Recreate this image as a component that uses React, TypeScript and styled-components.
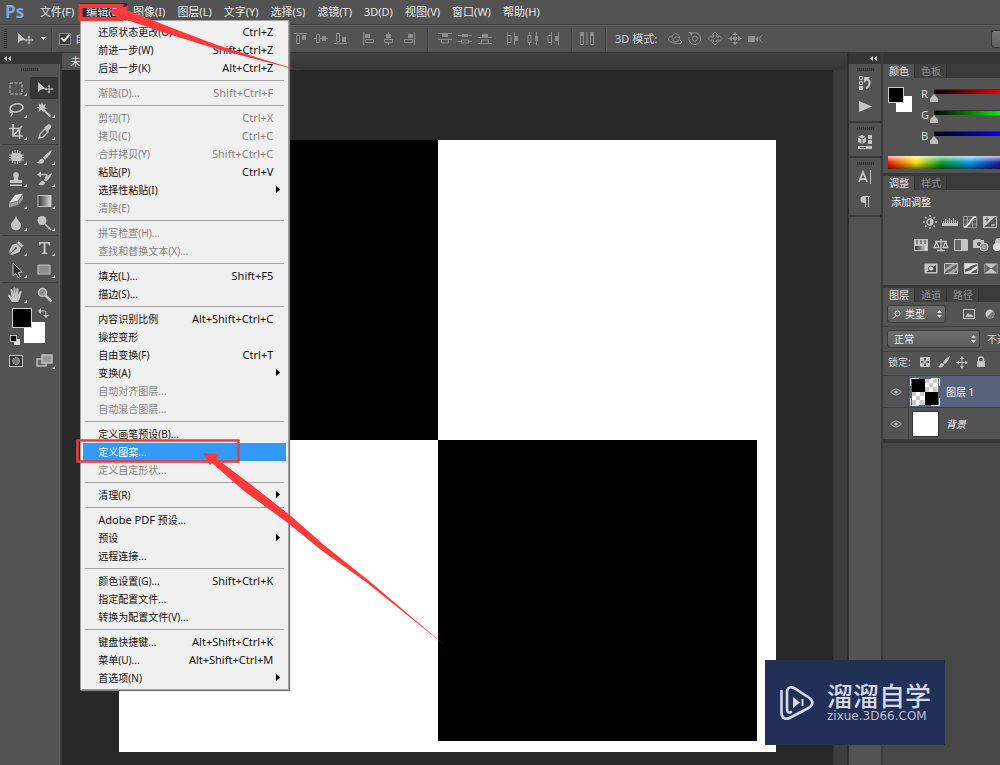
import React from 'react';
import styled, { createGlobalStyle, css } from 'styled-components';

const GlobalStyle = createGlobalStyle`
  *, *::before, *::after { box-sizing: border-box; }
  html, body { margin: 0; height: 100%; overflow: hidden; }
  body {
    background: #535353;
    color: #dcdcdc;
    font-family: 'Noto Sans', 'Noto Sans CJK SC', sans-serif;
    font-size: 11px;
    line-height: 16px;
  }
  button, input, select { font: inherit; color: inherit; margin: 0; }
  button { border: 0; padding: 0; background: none; }
  ul { list-style: none; margin: 0; padding: 0; }
  svg { display: block; flex: none; }
`;

const App_ = styled.div`
  position: relative;
  display: flex;
  flex-direction: column;
  height: 100vh;
  overflow: hidden;
`;

/* ---------- menu bar ---------- */

const MenuBar = styled.nav`
  display: flex;
  align-items: center;
  height: 24px;
  flex: none;
  padding-left: 5px;
  background: #535353;
`;
const Logo = styled.div`
  width: 29px;
  color: #7ba9d6;
  font: bold 17px/24px 'Open Sans', 'Noto Sans', sans-serif;
`;
const MenuEntry = styled.div`
  position: relative;
`;
const MenuTitle = styled.button<{ $open?: boolean }>`
  display: block;
  height: 18px;
  padding: 0 6px;
  white-space: nowrap;
  color: #e6e6e6;
  background: ${(p) => (p.$open ? '#2f2f2f' : 'transparent')};
`;
const Dropdown = styled.ul`
  position: absolute;
  z-index: 5;
  top: 17px;
  left: 0;
  width: 209px;
  padding: 2px 2px 2px;
  background: #f0f0f0;
  border: 1px solid #a0a0a0;
  box-shadow: 1px 1px 1px #777;
`;
const Command = styled.button<{ $off?: boolean; $hot?: boolean }>`
  display: flex;
  align-items: center;
  width: 100%;
  height: 18px;
  padding: 0 6px 0 15px;
  font-size: 10px;
  white-space: nowrap;
  text-align: left;
  color: ${(p) => (p.$hot ? '#fff' : p.$off ? '#838383' : '#111')};
  background: ${(p) => (p.$hot ? '#3399ff' : 'transparent')};
`;
const CommandName = styled.span`
  flex: 1;
`;
const Latin = styled.span`
  font-size: 11px;
`;
const Shortcut = styled.kbd`
  padding-right: 7px;
  font-family: inherit;
  font-size: 11px;
`;
const MenuRule = styled.li`
  height: 7px;
  margin: 0 2px;
  border-bottom: 3px solid transparent;
  padding-top: 3px;
  background: linear-gradient(#a4a4a4, #a4a4a4) content-box;
`;

/* ---------- options bar ---------- */

const OptionsBar = styled.div`
  display: flex;
  align-items: center;
  flex: none;
  height: 29px;
  padding-left: 4px;
  overflow: hidden;
  background: #535353;
  border-top: 1px solid #3f3f3f;
  border-bottom: 1px solid #383838;
  box-shadow: inset 0 1px #626262;
  color: #cfcfcf;
`;
const Divider = styled.i`
  width: 2px;
  height: 24px;
  flex: none;
  background: #414141;
  border-right: 1px solid #5f5f5f;
`;
const OptionGroup = styled.div<{ $gap?: number; $left?: number; $right?: number }>`
  display: flex;
  align-items: center;
  flex: none;
  gap: ${(p) => p.$gap ?? 4}px;
  padding: 0 ${(p) => p.$right ?? 0}px 0 ${(p) => p.$left ?? 0}px;
`;
const AutoSelect = styled.label`
  display: flex;
  align-items: center;
  gap: 4px;
  width: 234px;
  flex: none;
  padding-left: 6px;
  white-space: nowrap;
`;
const Check = styled.input`
  appearance: none;
  width: 12px;
  height: 12px;
  border: 1px solid #8a8a8a;
  background: #3c3c3c;
  display: grid;
  place-items: center;
  &::after {
    content: '';
    width: 9px;
    height: 5px;
    border: solid #e8e8e8;
    border-width: 0 0 2px 2px;
    transform: rotate(-48deg) translate(1px, -1px);
  }
`;
const EdgeButton = styled.button`
  width: 9px;
  height: 18px;
  margin-left: auto;
  border: 1px solid #383838;
  border-right: 0;
  border-radius: 3px 0 0 3px;
  background: linear-gradient(#777, #5e5e5e);
`;

/* ---------- workspace ---------- */

const Workspace = styled.div`
  display: flex;
  flex: 1;
  min-height: 0;
  background: #3a3a3a;
`;
const Column = styled.aside<{ $w: number }>`
  display: flex;
  flex-direction: column;
  flex: none;
  width: ${(p) => p.$w}px;
  margin-right: 2px;
  overflow: hidden;
`;
const CollapseBar = styled.div<{ $end?: boolean }>`
  display: flex;
  align-items: center;
  justify-content: ${(p) => (p.$end ? 'flex-end' : 'flex-start')};
  flex: none;
  height: 11px;
  padding: 0 3px;
  background: #363636;
`;
const ToolBody = styled.div`
  flex: 1;
  padding: 4px 1px 4px 2px;
  background: #535353;
  border-right: 1px solid #606060;
`;
const Grip = styled.i<{ $w: number }>`
  display: block;
  width: ${(p) => p.$w}px;
  height: 3px;
  margin: 0 auto;
  background: repeating-linear-gradient(90deg, #333 0 1px, #4c4c4c 1px 2px);
`;
const ToolGroup = styled.div<{ $rule?: boolean; $top?: number }>`
  display: grid;
  grid-template-columns: 28px 28px;
  padding: ${(p) => p.$top ?? 1}px 0 1px;
  ${(p) => p.$rule && css`border-top: 1px solid #3e3e3e;`}
`;
const Tool = styled.button<{ $on?: boolean }>`
  width: 28px;
  height: 22px;
  border-radius: 3px;
  ${(p) => p.$on && css`background: #373737; box-shadow: inset 0 0 0 1px #2d2d2d;`}
`;

const DocArea = styled.main`
  display: flex;
  flex-direction: column;
  flex: 1;
  min-width: 0;
  border-right: 2px solid #303030;
  background: #282828;
`;
const DocTabs = styled.div`
  display: flex;
  height: 17px;
  flex: none;
  background: linear-gradient(#404040, #373737);
`;
const DocTab = styled.button`
  padding: 0 8px;
  background: #535353;
`;
const DocBody = styled.div`
  display: flex;
  flex: 1;
  min-height: 0;
`;
const Pasteboard = styled.div`
  display: flex;
  flex: 1;
  padding: 70px 57px 13px;
`;
const Artboard = styled.div`
  flex: 1;
  display: grid;
  grid-template-columns: 319fr 319fr 19fr;
  grid-template-rows: 300fr 300fr 11fr;
  background: #fff;
`;
const Block = styled.div<{ $cell: number }>`
  grid-area: ${(p) => `${p.$cell} / ${p.$cell}`};
  background: #000;
`;
const Scroll = styled.div`
  width: 14px;
  background: #3d3d3d;
  border-left: 1px solid #333;
`;

/* ---------- docked icon strip ---------- */

const DockBody = styled.div`
  flex: 1;
  background: #535353;
`;
const DockGroup = styled.div`
  display: flex;
  flex-direction: column;
  align-items: center;
  padding: 4px 0 2px;
  border-bottom: 2px solid #3a3a3a;
`;
const DockButton = styled.button`
  width: 24px;
  height: 24px;
  display: grid;
  place-items: center;
`;

/* ---------- panels ---------- */

const Panels = styled.aside`
  display: flex;
  flex-direction: column;
  flex: none;
  width: 117px;
  overflow: hidden;
  background: #474747;
  font-size: 10px;
`;
const PanelTabs = styled.div`
  display: flex;
  flex: none;
  height: 14px;
  background: #3b3b3b;
`;
const PanelTab = styled.button<{ $on?: boolean }>`
  flex: none;
  padding: 0 5px 0 6px;
  line-height: 14px;
  border-right: 1px solid #303030;
  background: ${(p) => (p.$on ? '#535353' : '#414141')};
  color: ${(p) => (p.$on ? '#e4e4e4' : '#8f8f8f')};
`;
const PanelBody = styled.div<{ $h?: number }>`
  ${(p) => p.$h && css`height: ${p.$h}px;`}
  flex: none;
  background: #535353;
  border-bottom: 3px solid #383838;
  overflow: hidden;
`;
const ColorTop = styled.div`
  display: flex;
  gap: 9px;
  padding: 5px 0 0 5px;
`;
const Sliders = styled.div`
  flex: none;
`;
const Channel = styled.label`
  display: flex;
  align-items: center;
  height: 21px;
  width: 160px;
  font-size: 11px;
`;
const ChannelName = styled.span`
  width: 13px;
`;
const Range = styled.input<{ $to: string }>`
  appearance: none;
  width: 140px;
  height: 14px;
  padding-bottom: 4px;
  background: none;
  &::-webkit-slider-runnable-track {
    height: 5px;
    background: linear-gradient(90deg, #000, ${(p) => p.$to} 70px);
    border-top: 1px solid #333;
  }
  &::-webkit-slider-thumb {
    appearance: none;
    width: 8px;
    height: 8px;
    margin: 4px 0 0 -4px;
    background: #bdbdbd;
    clip-path: polygon(50% 0, 100% 55%, 100% 100%, 0 100%, 0 55%);
  }
`;
const Spectrum = styled.div`
  height: 13px;
  margin: 10px 0 0 5px;
  background:
    linear-gradient(rgba(255,255,255,.75), rgba(255,255,255,0) 50%, rgba(0,0,0,.55)),
    linear-gradient(90deg, #f01800, #ffe800 28px, #00a030 54px, #00a0f0 82px, #2818a0 112px);
`;
const AdjustTitle = styled.h2`
  margin: 0;
  padding: 4px 8px 4px;
  font-size: 10px;
  font-weight: 400;
  line-height: 17px;
  color: #eee;
`;
const AdjustRow = styled.div<{ $left: number }>`
  display: flex;
  align-items: flex-start;
  gap: 4px;
  height: 23px;
  padding-left: ${(p) => p.$left}px;
`;
const Field = styled.div`
  display: flex;
  align-items: center;
  height: 25px;
  padding-left: 4px;
  gap: 7px;
  white-space: nowrap;
  border-bottom: 1px solid #444;
`;
const SelectBox = styled.span<{ $w: number }>`
  position: relative;
  display: flex;
  align-items: center;
  flex: none;
  width: ${(p) => p.$w}px;
  height: 18px;
  border: 1px solid #3a3a3a;
  border-radius: 3px;
  background: linear-gradient(#6e6e6e, #5c5c5c);
  & > svg { position: absolute; pointer-events: none; }
  & > svg:last-child { right: 2px; }
  & > svg:first-child:not(:last-child) { left: 4px; }
`;
const Select = styled.select<{ $pad: number }>`
  appearance: none;
  width: 100%;
  height: 16px;
  padding: 0 0 0 ${(p) => p.$pad}px;
  border: 0;
  background: none;
  color: #eee;
`;
const LockRow = styled.div`
  display: flex;
  align-items: center;
  gap: 4px;
  height: 23px;
  padding: 0 0 4px 5px;
`;
const LayerItem = styled.li`
  display: flex;
  height: 32px;
  border-top: 1px solid #3d3d3d;
  background: #535353;
`;
const Eye = styled.button`
  width: 26px;
  display: grid;
  place-items: center;
  border-right: 1px solid #424242;
`;
const LayerMain = styled.button<{ $on?: boolean; $bg?: boolean }>`
  display: flex;
  align-items: center;
  gap: 6px;
  flex: 1;
  padding-left: 1px;
  text-align: left;
  white-space: nowrap;
  color: #f0f0f0;
  font-style: ${(p) => (p.$bg ? 'italic' : 'normal')};
  background: ${(p) => (p.$on ? '#576378' : 'transparent')};
`;
const LayerList = styled.ul`
  border-bottom: 1px solid #383838;
`;

/* ---------- overlays ---------- */

const Marks = styled.svg`
  position: absolute;
  z-index: 8;
  top: 0;
  left: 0;
  pointer-events: none;
`;
const Badge = styled.div`
  position: absolute;
  z-index: 9;
  right: 55px;
  bottom: 20px;
  display: flex;
  align-items: center;
  gap: 12px;
  width: 180px;
  height: 85px;
  padding-left: 14px;
  background: #223058;
  color: #d4d8e2;
`;
const BadgeText = styled.div`
  padding-bottom: 4px;
`;
const BadgeName = styled.div`
  font: 500 26px/30px 'Noto Sans CJK SC', sans-serif;
  white-space: nowrap;
`;
const BadgeUrl = styled.div`
  font: 12px/12px 'DejaVu Sans', sans-serif;
  color: #b9bfce;
`;

/* ---------- drawings ---------- */

const Chevrons = () => (
  <svg width="9" height="7" viewBox="0 0 9 7" fill="#ccc"><path d="M4 1v5L1 3.500zM8 1v5L5 3.500z" /></svg>
);
const UpDown = () => (
  <svg width="7" height="10" viewBox="0 0 7 10" fill="#ddd"><path d="M3.500 1 6 4H1zM3.500 9 1 6h5z" /></svg>
);

const G = '#c4c4c4';
const toolArt: Record<string, React.ReactNode> = {
  marquee: <rect x="8" y="6" width="12" height="11" fill="none" stroke={G} strokeDasharray="3 1.500" />,
  move: <><path d="M8 5v10l3-2.500 5-.5z" fill={G} /><path d="M19 9v6M16 12h6" stroke={G} /><path d="m19 7.500 1.500 2h-3zm0 9-1.500-2h3zm-4.500-4.500 2-1.500v3zm9 0-2-1.500v3z" fill={G} /></>,
  lasso: <><ellipse cx="14.500" cy="9" rx="6.500" ry="4" fill="none" stroke={G} strokeWidth="1.600" transform="rotate(-12 14 9)" /><path d="M9 11c-2 1-1 3 .5 2.500S10 17 8.500 17" fill="none" stroke={G} strokeWidth="1.300" /></>,
  wand: <><path d="m12 3 1 3 3-1-1.500 2.800L17 9.500l-3 .5-.5 3.500-2-2.800L8.500 13l.8-3.200-3-1.200 3-1L8.500 4.500l2.700 1.300z" fill={G} /><path d="m13.500 10.500 7 7" stroke={G} strokeWidth="2" /></>,
  crop: <path d="M11 3v12h10M7 7.500h10.500V18M11 15l9-10" fill="none" stroke={G} strokeWidth="1.700" />,
  dropper: <><path d="m9 17 1-4 5-5 3 3-5 5z" fill="none" stroke={G} strokeWidth="1.400" /><path d="m14 6.500 1.500-1L18 3.500c2-1 4 1 3 3l-2.500 3-.500 1z" fill={G} /></>,
  patch: <><rect x="9" y="7" width="11" height="8" rx="3" fill={G} /><path d="M10.500 5v12M13 4v14M15.500 4v14M18 5v12M7 9h15M7 11.500h15M7 14h15" stroke={G} strokeWidth=".9" /></>,
  brush: <><path d="M22 4c-4 2-7 5-9 8l2 1.800C18 11 21 8 22 4z" fill={G} /><path d="M12.300 12.500c-3 0-2 3-6 4 3 2 8 1.500 8-2z" fill={G} /></>,
  stamp: <path d="M14 4a3 3 0 0 1 2.500 4.500c-.8 1.500-.5 2.500 0 3.500H20v3H8v-3h3.500c.5-1 .8-2 0-3.500A3 3 0 0 1 14 4zM8 16.500h12V18H8z" fill={G} />,
  history: <><path d="M22 5c-4 2-6 4-8 7l2 1.500c3-2 5-5 6-8.500zM13 12.500c-3 0-2 3-5 4 3 1.500 7 1 7-2z" fill={G} /><path d="M10 6.500h6c2 0 1 2-1 3" fill="none" stroke={G} strokeWidth="1.300" /><path d="m7 6.500 4-3v6z" fill={G} /></>,
  eraser: <><path d="m13 5 8-1.500-5 7-9 2.500z" fill="#dedede" /><path d="m7 13.500 9-2.500v4l-9 2.500zM16.500 11l4.500-6v4l-4.500 6z" fill="#9c9c9c" /></>,
  gradient: <rect x="8" y="5.500" width="13" height="11" fill="url(#tone)" stroke={G} />,
  blur: <path d="M14 4c1 4 5 6 5 9.500a5 5 0 0 1-10 0C9 10 13 8 14 4z" fill={G} />,
  dodge: <><circle cx="12" cy="8.500" r="4.500" fill={G} /><path d="m15 12 6 6" stroke={G} strokeWidth="1.600" /></>,
  pen: <><path d="m16.500 4 5 4.500-2 2L15 6z" fill={G} /><path d="m14.500 6.500 4.500 4.500-1.500 4-7.500 3-1.500-1 5-4.500a1.200 1.200 0 1 0-1-1L8 16l-1-1 3-7z" fill={G} /></>,
  type: <path d="M9 5h11v3.500h-1L18 6.500h-2.500v9l2 .5v1h-6v-1l2-.5v-9H11l-1 2H9z" fill={G} />,
  path: <path d="M11 4v13l3-2.500 2 4 2.200-1-2-4 4-.5z" fill="#2f2f2f" stroke={G} />,
  shape: <rect x="8" y="6" width="12" height="9" fill="#8d8d8d" stroke={G} />,
  hand: <path d="m10 18-4-6c-.5-1.500 1-2 2-.5l1.500 1.500L8.500 6c0-1.500 1.500-1.500 2 0l1 4V4.500c0-1.500 2-1.500 2 0V10l1-5c.5-1.500 2-1 2 0l-.5 6 1.800-3.500c1-1 2-.5 1.700.5L18 14l-2 4z" fill={G} />,
  zoom: <><circle cx="12.500" cy="8.500" r="4" fill="#919191" stroke={G} strokeWidth="1.500" /><path d="m15.500 11.500 6 6" stroke={G} strokeWidth="2.500" /></>,
  mask: <><rect x="7.500" y="5.500" width="13" height="11" fill="#333" stroke={G} /><circle cx="14" cy="11" r="3.500" fill="#777" stroke="#ccc" strokeDasharray="1.500 1" /></>,
  screen: <><rect x="7" y="9" width="9" height="7" fill="#666" stroke={G} strokeWidth="1.400" /><rect x="12" y="5" width="10" height="8" fill="#999" stroke={G} strokeWidth="1.400" /></>,
};

const toolGroups: [string, string][][] = [
  [['marquee', '矩形选框'], ['move', '移动'], ['lasso', '套索'], ['wand', '魔棒'], ['crop', '裁剪'], ['dropper', '吸管']],
  [['patch', '修补'], ['brush', '画笔'], ['stamp', '图章'], ['history', '历史画笔'], ['eraser', '橡皮擦'], ['gradient', '渐变'], ['blur', '模糊'], ['dodge', '减淡']],
  [['pen', '钢笔'], ['type', '文字'], ['path', '路径选择'], ['shape', '矩形']],
  [['hand', '抓手'], ['zoom', '缩放']],
];

const ToolIcon = ({ name }: { name: string }) => (
  <svg width="28" height="22" viewBox="0 0 28 22">
    <defs><linearGradient id="tone"><stop stopColor="#333" /><stop offset="1" stopColor="#ddd" /></linearGradient></defs>
    {toolArt[name]}
    {!['move', 'zoom', 'mask'].includes(name) && <path d="M25 16v3h-3z" fill="#ddd" />}
  </svg>
);

const alignArt: Record<string, React.ReactNode> = {
  top: <><path d="M1 2.500h13" /><path d="M3.500 4.500h3v8h-3z" /><path className="f" d="M9 4h4v5H9z" /></>,
  middle: <><path d="M1 7.500h2M7 7.500h8" /><path d="M3.500 3.500h3v8h-3z" /><path className="f" d="M9 5h4v5H9z" /></>,
  bottom: <><path d="M1 12.500h13" /><path d="M3.500 2.500h3v8h-3z" /><path className="f" d="M9 6h4v5H9z" /></>,
  left: <><path d="M2.500 1v13" /><path d="M4.500 8.500h8v3h-8z" /><path className="f" d="M4 3h5v4H4z" /></>,
  center: <><path d="M7.500 1v7M7.500 12v2" /><path d="M3.500 8.500h8v3h-8z" /><path className="f" d="M5 3h5v4H5z" /></>,
  right: <><path d="M13.500 1v13" /><path d="M3.500 8.500h8v3h-8z" /><path className="f" d="M7 3h5v4H7z" /></>,
  dtop: <><path d="M1 2.500h14M1 8.500h14M4.500 9v3h7V9" /><path className="f" d="M5 3h6v3H5z" /></>,
  dmid: <><path d="M1 4.500h14M1 10.500h3M12 10.500h3M4.500 9v3h7V9z" /><path className="f" d="M5 3h6v3H5z" /></>,
  dbot: <><path d="M1 6.500h14M1 12.500h14M4.500 12V9h7v3" /><path className="f" d="M5 3h6v3H5z" /></>,
  dleft: <><path d="M2.500 1v13M9.500 1v13M3 4.500h3v7H3" /><path className="f" d="M10 5h3v5h-3z" /></>,
  dcen: <><path d="M4.500 1v3M4.500 12v2M11.500 1v13M3 4.500h3v7H3z" /><path className="f" d="M10 5h3v5h-3z" /></>,
  dright: <><path d="M6.500 1v13M13.500 1v13M6 4.500H3v7h3" /><path className="f" d="M10 5h3v5h-3z" /></>,
  auto: <><path d="M1.500 1.500h3v12h-3zM11.500 1.500h3v12h-3zM8 1v13" /><path className="f" d="M1 1h4v4H1zM11 1h4v4h-4z" /></>,
  orbit: <><path d="M5 8C5 4 7 2 10 3s3 5 1 7-5 1-5-1 4-4 7-2M5 5C1 6 0 9 4 11s9 2 11 0M13 9l2 2-2 2" /></>,
  roll: <><circle cx="8" cy="7.500" r="2.500" /><path d="M5 2.300a6 6 0 1 1-3 3.700" /><path className="f" d="M1 1h4v4z" /></>,
  pan: <><path d="M6.500 6V4H5l3-3 3 3H9.500v2H12V4.500l3 3-3 3V9H9.500v2H11l-3 3-3-3h1.500V9H4v1.500l-3-3 3-3V6z" /></>,
  slide: <><path d="M3 7.500h10M8 4v8" /><path className="f" d="M8 1l3 3H5zM8 14l3-3H5zM1 7.500 5 5v5zM15 7.500 11 5v5zM6 6h4v3H6z" /></>,
  camera: <><path className="f" d="M1 5h7v6H1zM8 8l3-3v6z" /><path d="m15 4-3 3.500 3 4" /></>,
};
const Glyph = styled.svg`
  fill: none;
  stroke: #8d8d8d;
  .f { fill: #8d8d8d; stroke: none; }
`;
const Align = ({ n }: { n: string }) => (
  <button aria-label={n}><Glyph width="16" height="15" viewBox="0 0 16 15">{alignArt[n]}</Glyph></button>
);

const adjustArt: Record<string, React.ReactNode> = {
  sun: <><circle cx="8" cy="7" r="3" fill="none" stroke={G} strokeWidth="1.300" /><path d="M8 4a3 3 0 0 1 0 6z" fill={G} /><path d="M8 0v2M8 12v2M1 7h2M13 7h2M3 2l1.500 1.500M11.500 10.500 13 12M13 2l-1.500 1.500M4.500 10.500 3 12" stroke={G} strokeWidth="1.300" /></>,
  levels: <path d="M0 11V8h1V6h1v2h1V4h1v4h1V5h1v3h1V3h1v5h1V5h1v3h1V3h1v5h1V5h1v3h1V6h1v5z" fill={G} />,
  curves: <><path d="M1.500 1.500h13v11h-13zM1 5h14M1 9h14M5.500 1v12M10.500 1v12" stroke="#999" fill="none" /><path d="M2 12c6 0 6-10 12-10" stroke="#eee" fill="none" strokeWidth="1.500" /></>,
  exposure: <><path d="M1 1h14v12H1z" fill={G} /><path d="M14 1 2 12h12z" fill="#555" /><path d="M3 4.500h4M5 2.500v4" stroke="#444" /><path d="M9 10h4" stroke="#eee" /><path d="M1.500 1.500h13v11h-13z" fill="none" stroke={G} /></>,
  hue: <><path d="M1 1h14v12H1z" fill={G} /><path d="M4 2v4M8 2v4M12 2v4" stroke="#666" strokeWidth="1.500" /><path d="M2 8h12v4H2z" fill="url(#tone)" /></>,
  balance: <path d="M8 1v11M4 12.500h8M2 3.500h12M3.500 4 1 9.500h5zM12.500 4 10 9.500h5z" fill="none" stroke={G} strokeWidth="1.300" />,
  bw: <><path d="M1.500 1.500h13v11h-13z" fill="#666" stroke={G} /><path d="M8 2h6v10H8z" fill={G} /></>,
  photo: <><path d="M0 2h2l1-1h4l1 1h3v8H0z" fill={G} /><circle cx="6" cy="6" r="2" fill="#555" /><circle cx="11" cy="9" r="4" fill="#999" stroke={G} /></>,
  mixer: <><circle cx="6" cy="4" r="4" fill={G} /><circle cx="4" cy="9" r="4" fill="#ddd" /></>,
  invert: <><path d="M1.500 2.500h13v10h-13z" fill={G} /><path d="M3 11 13 4v7z" fill="#444" /><circle cx="8" cy="7.500" r="2.500" fill="#ddd" stroke="#555" /></>,
  poster: <><path d="M1.500 2.500h13v10h-13z" fill="#666" stroke={G} /><path d="M2 8 9 3h5L2 11zM5 12l9-6v3l-4 3z" fill="#a8a8a8" /></>,
  thresh: <><path d="M1.500 2.500h13v10h-13z" fill="#ddd" stroke={G} /><path d="m2 8 4-1 2-2 6-2v2l-4 2-2 2-6 2zM8 12l2-2 4-2v4z" fill="#555" /></>,
  gmap: <><path d="M1.500 2.500h13v10h-13z" fill={G} /><path d="m2 3 6 4.500L2 12zM14 3 8 7.500l6 4.500z" fill="#666" /></>,
};
const Adjust = ({ n }: { n: string }) => (
  <button aria-label={n}><svg width="16" height="14" viewBox="0 0 16 14">{adjustArt[n]}</svg></button>
);

const EyeIcon = () => (
  <svg width="12" height="8" viewBox="0 0 12 8"><path d="M1 4c3-4 7-4 10 0-3 4-7 4-10 0z" fill="none" stroke="#a8a8a8" strokeWidth="1.200" /><circle cx="6" cy="4" r="1.800" fill="#a8a8a8" /></svg>
);
const Checker = () => (
  <svg width="30" height="28" viewBox="0 0 30 28">
    <rect x="2" y="1" width="26" height="26" fill="#fff" />
    <path d="M15 1h4v4h-4zM23 1h4v4h-4zM19 5h4v4h-4zM15 9h4v5h-4zM23 9h4v5h-4zM2 14h4v4H2zM10 14h4v4h-4zM6 18h4v4H6zM2 22h4v5H2zM10 22h4v5h-4z" fill="#ccc" />
    <path d="M2 1h13v13H2zM15 14h13v13H15z" fill="#000" />
    <path d="M.500 8V.500H9M21 .500h8.500V8M29.500 20v7.500H21M9 27.500H.500V20" fill="none" stroke="#eee" />
  </svg>
);
const Swatches = () => (
  <svg width="56" height="40" viewBox="0 0 56 40">
    <rect x="22" y="15" width="21" height="21" fill="#fff" />
    <rect x="10.500" y="1.500" width="19" height="19" fill="#000" stroke="#d0d0d0" />
    <path d="M38 4h5q1 0 1 5" fill="none" stroke={G} /><path d="m36 4 3-3v6zM44 11l-3-3h6z" fill={G} />
    <rect x="12" y="32" width="6" height="6" fill="#ddd" /><rect x="8.500" y="28.500" width="6" height="6" fill="#111" stroke="#bbb" />
  </svg>
);

/* ---------- data ---------- */

type Cmd = [name: React.ReactNode, shortcut?: string, state?: 'off' | 'hot'];
const SUB = '>';
const commands: Cmd[][] = [
  [['还原状态更改(O)', 'Ctrl+Z'], ['前进一步(W)', 'Shift+Ctrl+Z'], ['后退一步(K)', 'Alt+Ctrl+Z']],
  [['渐隐(D)...', 'Shift+Ctrl+F', 'off']],
  [['剪切(T)', 'Ctrl+X', 'off'], ['拷贝(C)', 'Ctrl+C', 'off'], ['合并拷贝(Y)', 'Shift+Ctrl+C', 'off'], ['粘贴(P)', 'Ctrl+V'], ['选择性粘贴(I)', SUB], ['清除(E)', '', 'off']],
  [['拼写检查(H)...', '', 'off'], ['查找和替换文本(X)...', '', 'off']],
  [['填充(L)...', 'Shift+F5'], ['描边(S)...']],
  [['内容识别比例', 'Alt+Shift+Ctrl+C'], ['操控变形'], ['自由变换(F)', 'Ctrl+T'], ['变换(A)', SUB], ['自动对齐图层...', '', 'off'], ['自动混合图层...', '', 'off']],
  [['定义画笔预设(B)...'], ['定义图案...', '', 'hot'], ['定义自定形状...', '', 'off']],
  [['清理(R)', SUB]],
  [[<><Latin>Adobe PDF </Latin>预设...</>], ['预设', SUB], ['远程连接...']],
  [['颜色设置(G)...', 'Shift+Ctrl+K'], ['指定配置文件...'], ['转换为配置文件(V)...']],
  [['键盘快捷键...', 'Alt+Shift+Ctrl+K'], ['菜单(U)...', 'Alt+Shift+Ctrl+M'], ['首选项(N)', SUB]],
];
const titles = ['文件(F)', '编辑(E)', '图像(I)', '图层(L)', '文字(Y)', '选择(S)', '滤镜(T)', '3D(D)', '视图(V)', '窗口(W)', '帮助(H)'];

const EditMenu = () => (
  <Dropdown>
    {commands.map((group, g) => (
      <React.Fragment key={g}>
        {g > 0 && <MenuRule />}
        {group.map(([name, key, state], i) => (
          <li key={i}>
            <Command $off={state === 'off'} $hot={state === 'hot'}>
              <CommandName>{name}</CommandName>
              {key === SUB
                ? <svg width="4" height="8" viewBox="0 0 4 8"><path d="M0 0v7l4-3.500z" fill="#000" /></svg>
                : key && <Shortcut>{key}</Shortcut>}
            </Command>
          </li>
        ))}
      </React.Fragment>
    ))}
  </Dropdown>
);

export default function App() {
  return (
    <App_>
      <GlobalStyle />
      <MenuBar>
        <Logo>Ps</Logo>
        {titles.map((t, i) => (
          <MenuEntry key={t}>
            <MenuTitle $open={i === 1}>{t}</MenuTitle>
            {i === 1 && <EditMenu />}
          </MenuEntry>
        ))}
      </MenuBar>

      <OptionsBar>
        <svg width="4" height="19" viewBox="0 0 4 19"><path d="M1.500 0v19" stroke="#333" strokeWidth="3" strokeDasharray="1 1" /></svg>
        <OptionGroup $left={2} $right={4} $gap={2}>
          <ToolIcon name="move" />
          <svg width="7" height="4" viewBox="0 0 7 4"><path d="M1 0h5L3.500 3z" fill="#ddd" /></svg>
        </OptionGroup>
        <Divider />
        <AutoSelect><Check type="checkbox" defaultChecked />自动选择:</AutoSelect>
        <OptionGroup $left={6}>{['top', 'middle', 'bottom'].map((n) => <Align key={n} n={n} />)}</OptionGroup>
        <OptionGroup $left={12} $right={10}>{['left', 'center', 'right'].map((n) => <Align key={n} n={n} />)}</OptionGroup>
        <Divider />
        <OptionGroup $left={8}>{['dtop', 'dmid', 'dbot'].map((n) => <Align key={n} n={n} />)}</OptionGroup>
        <OptionGroup $left={12} $right={10}>{['dleft', 'dcen', 'dright'].map((n) => <Align key={n} n={n} />)}</OptionGroup>
        <Divider />
        <OptionGroup $left={6} $right={10}><Align n="auto" /></OptionGroup>
        <Divider />
        <OptionGroup $left={8} $right={10}>3D 模式:</OptionGroup>
        <OptionGroup>{['orbit', 'roll', 'pan', 'slide', 'camera'].map((n) => <Align key={n} n={n} />)}</OptionGroup>
        <EdgeButton aria-label="工作区" />
      </OptionsBar>

      <Workspace>
        <Column $w={60}>
          <CollapseBar><Chevrons /></CollapseBar>
          <ToolBody>
            <Grip $w={18} />
            {toolGroups.map((group, g) => (
              <ToolGroup key={g} $rule={g > 0} $top={g === 0 ? 6 : 1}>
                {group.map(([n, label]) => (
                  <Tool key={n} aria-label={label} $on={n === 'move'}><ToolIcon name={n} /></Tool>
                ))}
              </ToolGroup>
            ))}
            <Swatches />
            <ToolGroup $top={3}>
              {['mask', 'screen'].map((n) => <Tool key={n} aria-label={n}><ToolIcon name={n} /></Tool>)}
            </ToolGroup>
          </ToolBody>
        </Column>

        <DocArea>
          <DocTabs><DocTab>未标题-1</DocTab></DocTabs>
          <DocBody>
            <Pasteboard>
              <Artboard>
                <Block $cell={1} />
                <Block $cell={2} />
              </Artboard>
            </Pasteboard>
            <Scroll />
          </DocBody>
        </DocArea>

        <Column $w={32}>
          <CollapseBar $end><Chevrons /></CollapseBar>
          <DockBody>
            <DockGroup>
              <Grip $w={17} />
              <DockButton aria-label="历史记录">
                <svg width="16" height="16" viewBox="0 0 16 16" fill="none" stroke={G}><path d="M2.500 1.500h3v3h-3zM2.500 6.500h3v3h-3z" /><path d="M2 11h4v4H2z" fill={G} stroke="none" /><path d="M9 13c4-1 5-7 1-9" strokeWidth="2" /><path d="M7 2h6l-6 6z" fill={G} stroke="none" /></svg>
              </DockButton>
              <DockButton aria-label="动作">
                <svg width="14" height="12" viewBox="0 0 14 12"><path d="M1 0v11l13-5.500z" fill={G} /></svg>
              </DockButton>
            </DockGroup>
            <DockGroup>
              <Grip $w={17} />
              <DockButton aria-label="3D">
                <svg width="16" height="16" viewBox="0 0 16 16" fill={G}><path d="M1 3 5 1l4 2v5l-4 2-4-2z" /><path d="m1 3 4 2 4-2M5 5v5" stroke="#535353" fill="none" /><path d="M11 1h4v4h-4zM11 6h4v4h-4zM1 12h14v3H1z" /><path d="M3 13.500h6" stroke="#555" /></svg>
              </DockButton>
            </DockGroup>
            <DockGroup>
              <Grip $w={17} />
              <DockButton aria-label="字符">
                <svg width="14" height="14" viewBox="0 0 14 14" fill="none" stroke={G} strokeWidth="1.800"><path d="M1 12 5 2l4 10M2.500 9h5" /><path d="M12.500 0v14" strokeWidth="1" /></svg>
              </DockButton>
              <DockButton aria-label="段落">
                <svg width="12" height="13" viewBox="0 0 12 13" fill={G}><path d="M11 1H5a3.500 3.500 0 0 0 0 7h1v4h1V2h2v10h1V2h1z" /></svg>
              </DockButton>
            </DockGroup>
          </DockBody>
        </Column>

        <Panels>
          <CollapseBar />
          <PanelTabs><PanelTab $on>颜色</PanelTab><PanelTab>色板</PanelTab></PanelTabs>
          <PanelBody $h={98}>
            <ColorTop>
              <svg width="24" height="30" viewBox="0 0 24 30"><rect x="8" y="13" width="16" height="16" fill="#fff" /><rect x=".5" y="4.500" width="15" height="15" fill="#000" stroke="#ccc" /></svg>
              <Sliders>
                <Channel><ChannelName>R</ChannelName><Range type="range" min="0" max="255" defaultValue="0" $to="#f00" /></Channel>
                <Channel><ChannelName>G</ChannelName><Range type="range" min="0" max="255" defaultValue="0" $to="#0f0" /></Channel>
                <Channel><ChannelName>B</ChannelName><Range type="range" min="0" max="255" defaultValue="0" $to="#00f" /></Channel>
              </Sliders>
            </ColorTop>
            <Spectrum />
          </PanelBody>
          <PanelTabs><PanelTab $on>调整</PanelTab><PanelTab>样式</PanelTab></PanelTabs>
          <PanelBody $h={98}>
            <AdjustTitle>添加调整</AdjustTitle>
            <AdjustRow $left={39}>{['sun', 'levels', 'curves', 'exposure'].map((n) => <Adjust key={n} n={n} />)}</AdjustRow>
            <AdjustRow $left={30}>{['hue', 'balance', 'bw', 'photo', 'mixer'].map((n) => <Adjust key={n} n={n} />)}</AdjustRow>
            <AdjustRow $left={40}>{['invert', 'poster', 'thresh', 'gmap'].map((n) => <Adjust key={n} n={n} />)}</AdjustRow>
          </PanelBody>
          <PanelTabs><PanelTab $on>图层</PanelTab><PanelTab>通道</PanelTab><PanelTab>路径</PanelTab></PanelTabs>
          <PanelBody>
            <Field>
              <SelectBox $w={59}>
                <svg width="9" height="9" viewBox="0 0 9 9" fill="none" stroke="#ddd"><circle cx="5.500" cy="3.500" r="2.500" /><path d="m4 5.500-3 3" /></svg>
                <Select aria-label="筛选" $pad={17}><option>类型</option></Select>
                <UpDown />
              </SelectBox>
              <svg width="44" height="14" viewBox="0 0 44 14"><rect x="10.500" y="2.500" width="11" height="9" fill="#555" stroke={G} /><path d="m12 10 3-4 2 2 1-1 3 3z" fill={G} /><circle cx="37" cy="7" r="4.500" fill={G} /><path d="M34 10 40 4a4 4 0 0 1-6 6z" fill="#777" /></svg>
            </Field>
            <Field>
              <SelectBox $w={93}>
                <Select aria-label="混合模式" $pad={6}><option>正常</option></Select>
                <UpDown />
              </SelectBox>
              不透明度:
            </Field>
            <LockRow>
              锁定:
              <svg width="75" height="14" viewBox="0 0 75 14">
                <path d="M5.500 2.500h9v9h-9z" fill="#555" stroke={G} /><path d="M6 3h3v3H6zM11 3h3v3h-3zM8.500 5.500h3v3h-3zM6 8h3v3H6zM11 8h3v3h-3z" fill={G} />
                <path d="M35 1c-4 2-6 4-7 7l2 1c2-2 4-4 5-8zM27 8c-2 0-2 3-4 4 3 1 6 0 6-3z" fill={G} />
                <path d="M47 3v9M42.500 7.500h9" stroke={G} /><path d="m47 1 2 3h-4zM47 14l-2-3h4zM41 7.500 44 5.500v4zM53 7.500 50 5.500v4z" fill={G} />
                <path d="M62 6h8v6h-8z" fill={G} /><path d="M63.500 6V4.500a2.500 2.500 0 0 1 5 0V6" fill="none" stroke={G} strokeWidth="1.400" />
              </svg>
            </LockRow>
            <LayerList>
              <LayerItem>
                <Eye aria-label="显示图层"><EyeIcon /></Eye>
                <LayerMain $on><Checker />图层 1</LayerMain>
              </LayerItem>
              <LayerItem>
                <Eye aria-label="显示图层"><EyeIcon /></Eye>
                <LayerMain $bg>
                  <svg width="30" height="28" viewBox="0 0 30 28"><rect x="2.500" y="1.500" width="26" height="25" fill="#fff" stroke="#333" /></svg>
                  背景
                </LayerMain>
              </LayerItem>
            </LayerList>
          </PanelBody>
        </Panels>
      </Workspace>

      <Marks width="460" height="660" viewBox="0 0 460 660">
        <g fill="none" stroke="#f03a3c">
          <rect x="80.500" y="6" width="41" height="13" strokeWidth="4" />
          <rect x="77.500" y="440.500" width="161" height="21" strokeWidth="2.500" />
        </g>
        <path d="M108 10 129 6 127 10 167 26 217 45 301 71 217 49 165 33 124 19 123 22z" fill="#fb3b3b" />
        <path d="M203 453 218 454 217 459 249 483 291 516 324 545 368 580 447 647 366 582 321 550 288 523 244 491 212 463 210 465z" fill="#fb3b3b" />
      </Marks>

      <Badge>
        <svg width="36" height="38" viewBox="0 0 36 38" fill="none" stroke="#d4d8e2" strokeWidth="2.600" strokeLinecap="round">
          <path d="M2.500 7v22c0 5 4 7 8 5l19-10c5-3 5-7 1-10L15 4C11 2 8 4 8 8v17c0 4 2 4 4 3" />
          <path d="m14 13 7 5.500-7 5.500z" fill="#d4d8e2" stroke="none" /><path d="M23.500 15v7" strokeWidth="2" strokeLinecap="butt" />
        </svg>
        <BadgeText>
          <BadgeName>溜溜自学</BadgeName>
          <BadgeUrl>zixue.3D66.COM</BadgeUrl>
        </BadgeText>
      </Badge>
    </App_>
  );
}
